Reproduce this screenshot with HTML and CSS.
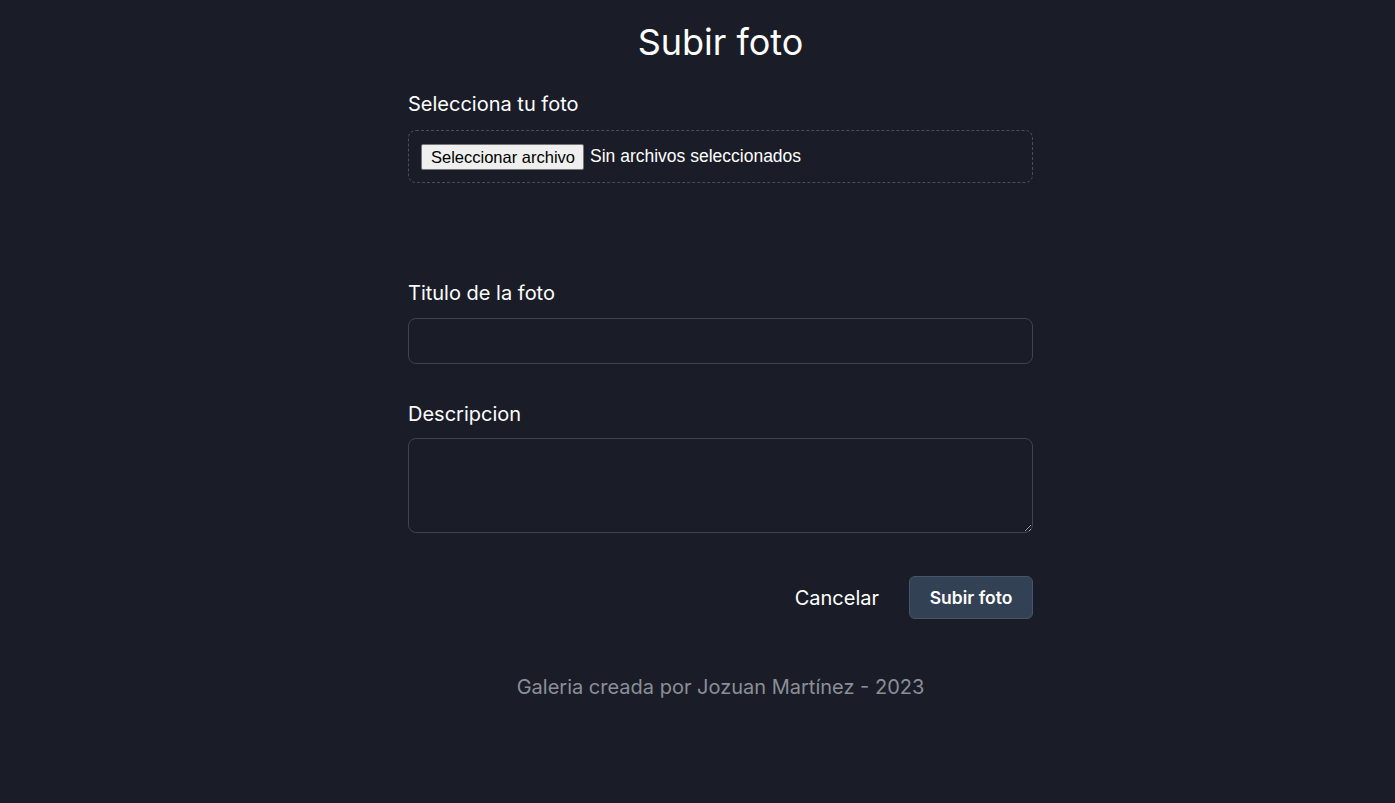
FILE: index.html
```html
<!DOCTYPE html>
<html lang="es">
<head>
<meta charset="utf-8">
<title>Subir foto</title>
<link rel="stylesheet" href="styles.css">
</head>
<body>
<main class="page">
  <h1 class="title">Subir foto</h1>
  <form class="form">
    <div class="field">
      <label class="label">Selecciona tu foto</label>
      <div class="dropzone">
        <span class="file-btn">Seleccionar archivo</span>
        <span class="file-text">Sin archivos seleccionados</span>
      </div>
    </div>
    <div class="field field-title">
      <label class="label">Titulo de la foto</label>
      <input class="input" type="text">
    </div>
    <div class="field field-desc">
      <label class="label">Descripcion</label>
      <textarea class="textarea"></textarea>
    </div>
    <div class="actions">
      <button type="button" class="btn-cancel">Cancelar</button>
      <button type="button" class="btn-submit">Subir foto</button>
    </div>
  </form>
  <footer class="footer">Galeria creada por Jozuan Martínez - 2023</footer>
</main>
</body>
</html>
```

FILE: styles.css
```css
html, body {
  margin: 0;
  padding: 0;
  background: #1a1d27;
}
body {
  font-family: Inter, "Noto Sans", sans-serif;
  color: #ffffff;
  min-height: 803px;
}
.page {
  width: 625px;
  margin-left: 408px;
  padding-top: 22px;
  display: flex;
  flex-direction: column;
}
.title {
  margin: 0;
  font-size: 36px;
  line-height: 40px;
  font-weight: 400;
  text-align: center;
}
.form {
  margin-top: 28px;
  display: flex;
  flex-direction: column;
}
.field {
  display: flex;
  flex-direction: column;
}
.label {
  font-size: 20px;
  line-height: 28px;
  color: #ffffff;
  margin-bottom: 10px;
}
.dropzone {
  box-sizing: border-box;
  height: 53px;
  margin-top: 2px;
  border: 1px dashed #4a4e5a;
  border-radius: 8px;
  padding: 0 12px;
  display: flex;
  align-items: center;
  gap: 6px;
  font-family: "Liberation Sans", Arial, sans-serif;
}
.file-btn {
  background: #efefef;
  color: #000;
  border: 1px solid #767676;
  border-radius: 2px;
  padding: 3px 8px 3px 9px;
  line-height: 18px;
  font-size: 16.5px;
}
.file-text {
  color: #ffffff;
  font-size: 17.5px;
}
.field-title {
  margin-top: 96px;
}
.field-title .label {
  margin-bottom: 11px;
}
.input {
  box-sizing: border-box;
  height: 46px;
  background: transparent;
  border: 1px solid #3f434f;
  border-radius: 8px;
  color: #fff;
  font-size: 16px;
  padding: 0 12px;
  outline: none;
}
.field-desc {
  margin-top: 36px;
}
.textarea {
  box-sizing: border-box;
  height: 95px;
  background: transparent;
  border: 1px solid #3f434f;
  border-radius: 8px;
  color: #fff;
  font-size: 16px;
  padding: 8px 12px;
  outline: none;
  resize: vertical;
  font-family: inherit;
}
.actions {
  margin-top: 43px;
  display: flex;
  justify-content: flex-end;
  align-items: center;
  gap: 30px;
}
.btn-cancel {
  background: none;
  border: none;
  color: #fff;
  font-family: inherit;
  font-size: 20px;
  padding: 0;
  cursor: pointer;
}
.btn-submit {
  box-sizing: border-box;
  width: 124px;
  height: 43px;
  background: #334155;
  border: 1px solid #475569;
  border-radius: 6px;
  color: #fff;
  font-family: inherit;
  font-size: 17.5px;
  font-weight: 600;
  cursor: pointer;
}
.footer {
  margin-top: 54px;
  text-align: center;
  color: #8b8f98;
  font-size: 20px;
  line-height: 28px;
}
```
